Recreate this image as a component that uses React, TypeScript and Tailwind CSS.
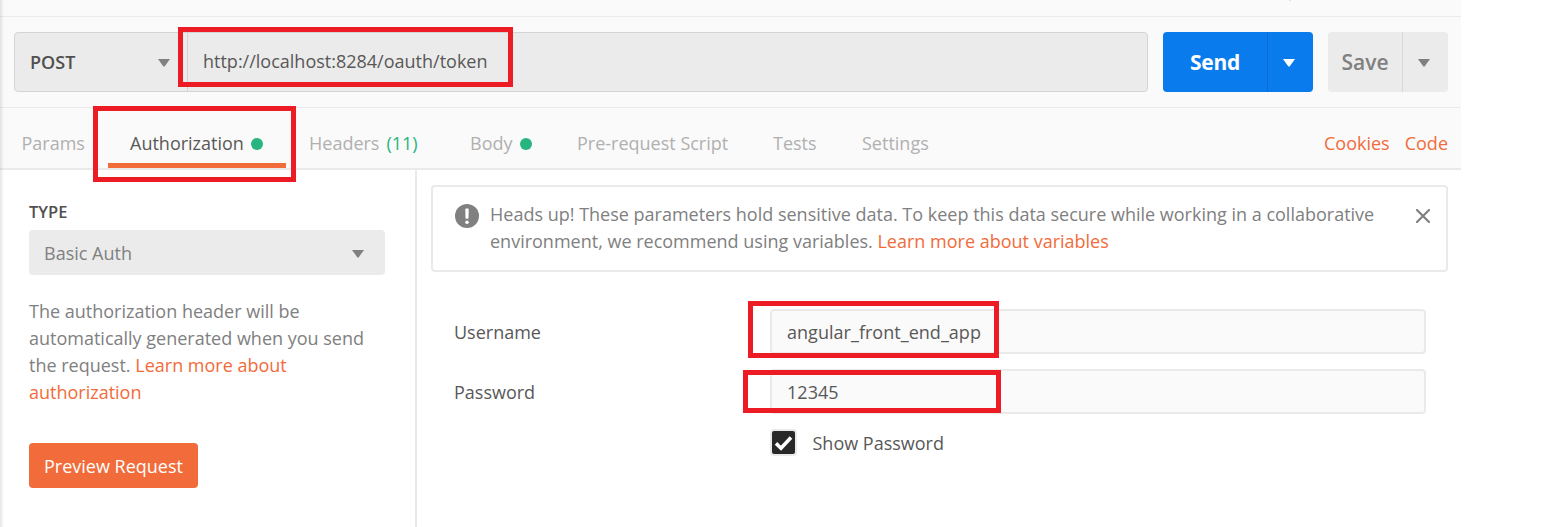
import React from "react";

function Caret({ className }: { className: string }) {
  return (
    <svg width="12" height="8" viewBox="0 0 12 8" className={className}>
      <path d="M0 0H12L6.6 7.4H5.4Z" fill="currentColor" />
    </svg>
  );
}

function Dot() {
  return <span className="h-3 w-3 shrink-0 rounded-full bg-[#26b47f]" />;
}

function Tab({ className, children }: { className: string; children: React.ReactNode }) {
  return <div className={`flex h-full items-center whitespace-nowrap pt-[11px] ${className}`}>{children}</div>;
}

function Highlight({ className }: { className: string }) {
  return <div className={`pointer-events-none absolute border-[5px] border-[#ed1c24] ${className}`} />;
}

function Field({ label, value }: { label: string; value: string }) {
  return (
    <div className="flex h-[45px] items-center">
      <label className="w-[316px] pt-[2px] text-[#585858]">{label}</label>
      <div className="flex h-[45px] w-[656px] items-center rounded border-2 border-[#eaeaea] bg-[#fafafa] pl-[15px] pt-[2px] tracking-[0.03px] text-[#585858]">
        {value}
      </div>
    </div>
  );
}

export default function App() {
  return (
    <div className="relative h-[527px] w-[1544px] overflow-hidden bg-white font-['Open_Sans',sans-serif] text-[18px] leading-[27px] text-[#808080]">
      <div className="flex h-full w-[1461px] flex-col">
        <div className="h-[17px] shrink-0 border-b border-[#eaeaea] bg-[#fafafa]" />

        <div className="flex h-[91px] shrink-0 border-b border-[#eaeaea] bg-[#fafafa] pl-[14px] pt-[15px]">
          <div className="flex h-[60px] w-[1134px] rounded border border-[#d4d4d4] bg-[#ebebeb] text-[#505050]">
            <div className="flex w-[173px] items-center justify-between border-r border-[#d4d4d4] pl-[15px] pr-[17px] font-semibold">
              <span>POST</span>
              <Caret className="mt-px text-[#808080]" />
            </div>
            <div className="flex items-center pb-[2px] pl-[15px] text-[#585858]">http://localhost:8284/oauth/token</div>
          </div>
          <div className="ml-[15px] flex h-[60px] w-[150px] rounded bg-[#097bed] text-[21px] font-bold text-white">
            <div className="flex w-[105px] items-center justify-center border-r border-[#086dd6] tracking-[-0.3px]">Send</div>
            <div className="flex w-[45px] items-center justify-center pr-[3px] pt-px">
              <Caret className="text-white" />
            </div>
          </div>
          <div className="ml-[15px] flex h-[60px] w-[120px] rounded bg-[#ebebeb] text-[21px] font-semibold text-[#808080]">
            <div className="flex w-[75px] items-center justify-center border-r border-[#d8d8d8]">Save</div>
            <div className="flex w-[45px] items-center justify-center pr-[3px] pt-px">
              <Caret className="text-[#808080]" />
            </div>
          </div>
        </div>

        <div className="flex h-[62px] shrink-0 border-b-2 border-[#eaeaea] bg-[#fafafa] pl-[21.5px] text-[#b0b0b0]">
          <Tab className="w-[86.5px]">Params</Tab>
          <Tab className="mr-[23px] w-[178px] gap-[7px] border-b-[5px] border-[#f26b3a] pl-[22px] text-[#585858]">
            <span className="pt-[5px]">Authorization</span>
            <span className="flex pt-[5px]">
              <Dot />
            </span>
          </Tab>
          <Tab className="w-[161px] gap-[7px]">
            Headers <span className="text-[#26b47f]">(11)</span>
          </Tab>
          <Tab className="w-[107px] gap-[7px]">
            Body <Dot />
          </Tab>
          <Tab className="w-[196px]">Pre-request Script</Tab>
          <Tab className="w-[89px]">Tests</Tab>
          <Tab className="">Settings</Tab>
          <Tab className="ml-auto gap-[15px] pr-[13px] text-[#f26b3a]">
            <span>Cookies</span>
            <span>Code</span>
          </Tab>
        </div>

        <div className="flex min-h-0 flex-1">
          <div className="w-[417px] shrink-0 border-r-2 border-[#eaeaea] pl-[29px] pt-[28px]">
            <div className="text-[16.5px] font-semibold text-[#505050]">TYPE</div>
            <div className="mt-[5px] flex h-[45px] w-[356px] items-center justify-between rounded bg-[#ebebeb] pl-[15px] pr-[21px]">
              <span className="pt-[2px]">Basic Auth</span>
              <Caret className="mt-[2px] text-[#808080]" />
            </div>
            <p className="mt-[23px] w-[350px]">
              The authorization header will be
              <br />
              automatically generated when you send
              <br />
              the request. <span className="text-[#f26b3a]">Learn more about<br />authorization</span>
            </p>
            <button className="mt-[37px] flex h-[45px] w-[169px] items-center justify-center whitespace-nowrap rounded bg-[#f26b3a] pt-[2px] font-medium text-white">
              Preview Request
            </button>
          </div>

          <div className="w-[1044px] pl-[14px] pt-[15px]">
            <div className="flex h-[87px] w-[1017px] rounded border-2 border-[#eaeaea] pl-[22px] pt-[14px]">
              <svg width="24" height="24" viewBox="0 0 24 24" className="mt-[3px] shrink-0">
                <circle cx="12" cy="12" r="12" fill="#808080" />
                <path d="M11.1 5.2h1.8l-.2 8.8h-1.4z" fill="#fff" stroke="#fff" strokeWidth="1.6" strokeLinejoin="round" />
                <circle cx="12" cy="18.2" r="1.8" fill="#fff" />
              </svg>
              <p className="ml-[11px] w-[920px]">
                Heads up! These parameters hold sensitive data. To keep this data secure while working in a collaborative
                <br />
                environment, we recommend using variables. <span className="text-[#f26b3a]">Learn more about variables</span>
              </p>
              <svg width="14" height="14" viewBox="0 0 14 14" className="ml-[6px] mt-[8px] shrink-0">
                <path d="M1 1L13 13M13 1L1 13" stroke="#808080" strokeWidth="2.2" strokeLinecap="round" />
              </svg>
            </div>

            <div className="mt-[37px] flex flex-col gap-[15px] pl-[23px]">
              <Field label="Username" value="angular_front_end_app" />
              <Field label="Password" value="12345" />
            </div>
            <div className="mt-[15px] flex h-[27px] items-center gap-[15.5px] pl-[339px] text-[#585858]">
              <div className="flex h-[27px] w-[27px] items-center justify-center rounded border-2 border-[#eaeaea] bg-[#282828]">
                <svg width="19" height="16" viewBox="0 0 19 16">
                  <path d="M2 8.4L7 13.2L17 2.6" fill="none" stroke="#fff" strokeWidth="3.6" />
                </svg>
              </div>
              <span className="pt-[2px]">Show Password</span>
            </div>
          </div>
        </div>
      </div>

      <div className="pointer-events-none absolute left-0 top-0 h-full w-1 bg-linear-to-r from-black/10 to-transparent" />
      <div className="absolute left-[1289px] top-0 h-px w-[2px] bg-[#e4e4e4]" />
      <Highlight className="left-[178px] top-[27px] h-[60px] w-[335px]" />
      <Highlight className="left-[93px] top-[106px] h-[76px] w-[203px]" />
      <Highlight className="left-[748px] top-[301px] h-[57px] w-[251px]" />
      <Highlight className="left-[743px] top-[370px] h-[43px] w-[258px]" />
    </div>
  );
}
